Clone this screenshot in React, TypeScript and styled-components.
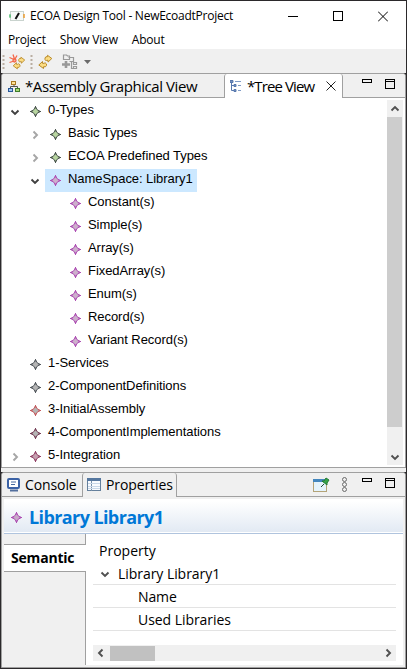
import React from 'react';
import styled, { createGlobalStyle } from 'styled-components';

const Global = createGlobalStyle`
  * { box-sizing: border-box; }
  body { margin: 0; background: #2b292b; overflow: hidden; }
  svg { display: block; flex: none; }
`;

const Window = styled.div`
  width: 407px;
  height: 669px;
  padding: 1px;
  background: #2b292b;
  display: flex;
  flex-direction: column;
  font-family: 'Open Sans', 'Noto Sans', sans-serif;
  color: #000;
  white-space: nowrap;
  line-height: 1;
`;

const Text = styled.span<{ $size: number; $gap?: number; $bold?: boolean; $color?: string }>`
  font-size: ${p => p.$size}px;
  letter-spacing: ${p => p.$gap ?? 0}px;
  font-weight: ${p => (p.$bold ? 700 : 400)};
  color: ${p => p.$color ?? '#000'};
  line-height: 20px;
`;

const TitleBar = styled.header`
  height: 30px;
  flex: none;
  background: #fff;
  display: flex;
  align-items: center;
  padding: 0 18px 0 8px;
  gap: 5px;
`;

const WindowButtons = styled.div`
  display: flex;
  margin-left: auto;
  gap: 35px;
`;

const MenuBar = styled.nav`
  height: 18px;
  flex: none;
  background: #fff;
  display: flex;
  align-items: center;
  padding-left: 7px;
  gap: 14px;
`;

const Toolbar = styled.div`
  height: 24px;
  flex: none;
  background: #f0f0f0;
`;

const Panel = styled.section<{ $height: number }>`
  height: ${p => p.$height}px;
  flex: none;
  border: 1px solid #a0a0a0;
  border-radius: 3px 3px 0 0;
  display: flex;
  flex-direction: column;
  background: #f0f0f0;
  overflow: hidden;
`;

const Divider = styled.div`
  height: 4px;
  flex: none;
  background: #f0f0f0;
`;

const TabBar = styled.div`
  height: 24px;
  flex: none;
  display: flex;
  background: linear-gradient(#a0a0a0, #a0a0a0) bottom / 100% 1px no-repeat #f0f0f0;
`;

const Tab = styled.div<{ $width: number; $active?: boolean; $fill?: string; $pad: number; $gap: number }>`
  width: ${p => p.$width}px;
  flex: none;
  display: flex;
  align-items: center;
  padding-left: ${p => p.$pad}px;
  gap: ${p => p.$gap}px;
  ${p => p.$active && `
    background: ${p.$fill ?? '#fff'};
    border-left: 1px solid #a0a0a0;
    border-right: 1px solid #a0a0a0;
    border-radius: 3px 3px 0 0;
  `}
`;

const CloseIcon = styled.svg`
  margin: 0 6px 0 auto;
`;

const PanelTools = styled.div`
  display: flex;
  margin-left: auto;
  padding-right: 9px;
`;

const TreeBody = styled.div`
  flex: 1;
  background: #fff;
  display: flex;
  justify-content: space-between;
  padding: 2px 2px 2px 0;
`;

const TreeRows = styled.ul`
  list-style: none;
  margin: 0;
  padding: 0;
`;

const Row = styled.li<{ $level: number }>`
  height: 23px;
  display: flex;
  align-items: center;
  padding-left: ${p => 2 + p.$level * 20}px;
`;

const ExpandCell = styled.div`
  width: 21px;
  height: 23px;
  display: flex;
  align-items: center;
  justify-content: center;
`;

const NodeCell = styled.div<{ $selected?: boolean }>`
  height: 23px;
  display: flex;
  align-items: center;
  padding: 0 7px 0 5px;
  background: ${p => (p.$selected ? '#cce8ff' : 'transparent')};
`;

const RowLabel = styled.div<{ $selected?: boolean }>`
  height: 23px;
  padding: 0 4px 4px 0;
  display: flex;
  align-items: center;
  background: ${p => (p.$selected ? '#cce8ff' : 'transparent')};
  font: 13px/20px 'Liberation Sans', Arial, sans-serif;
  letter-spacing: -0.06px;
`;

const VScroll = styled.div`
  width: 16px;
  height: 365px;
  background: #f0f0f0;
  display: flex;
  flex-direction: column;
  align-items: center;
  justify-content: space-between;
  padding: 4px 0 3px;
`;

const VThumb = styled.div`
  width: 15px;
  height: 310px;
  background: #cdcdcd;
  margin-right: 1px;
  margin-bottom: 23px;
`;

const Properties = styled.div`
  flex: 1;
  display: flex;
  flex-direction: column;
  padding: 2px;
`;

const Heading = styled.h1`
  margin: 0;
  height: 35px;
  flex: none;
  display: flex;
  align-items: center;
  padding: 2px 0 0 7px;
  gap: 7px;
  background: linear-gradient(#fff, #fff 6%, #e1e9f3);
  border-bottom: 1px solid #b0c4de;
  box-shadow: inset 0 -1px #fff;
`;

const Content = styled.div`
  flex: 1;
  display: flex;
  background: #fff;
`;

const Side = styled.aside`
  width: 82px;
  display: flex;
  flex-direction: column;
`;

const SideGap = styled.div<{ $top?: boolean }>`
  background: #f0f0f0;
  border-right: 1px solid #a0a0a0;
  ${p => (p.$top ? 'height: 11px; border-bottom: 1px solid #a0a0a0;' : 'flex: 1; border-top: 1px solid #a0a0a0;')}
`;

const SideTab = styled.div`
  height: 26px;
  padding: 0 0 0 7px;
  display: flex;
  align-items: center;
`;

const Table = styled.div`
  width: 303px;
  margin-left: 7px;
  padding-top: 5px;
`;

const Cell = styled.div<{ $indent: number; $line?: boolean }>`
  height: 23px;
  display: flex;
  align-items: center;
  gap: 8px;
  padding: 2px 0 0 ${p => p.$indent}px;
  border-bottom: 1px solid ${p => (p.$line ? '#e3e3e3' : 'transparent')};
`;

const HScroll = styled.div`
  height: 16px;
  margin-top: 14px;
  background: #f0f0f0;
  display: flex;
  align-items: center;
  padding: 0 3px;
`;

const HThumb = styled.div`
  width: 45px;
  height: 15px;
  margin: 0 auto 0 4px;
  background: #c1c1c1;
`;

type Dir = 'up' | 'down' | 'left' | 'right';
const arrows: Record<Dir, string> = {
  up: 'M1.5 6.5 5 3l3.5 3.5',
  down: 'M1.5 3.5 5 7l3.5-3.5',
  left: 'M6.5 1.5 3 5l3.5 3.5',
  right: 'M3.5 1.5 7 5 3.5 8.5',
};
const Arrow = ({ dir, color = '#505050' }: { dir: Dir; color?: string }) => (
  <svg width="10" height="10" fill="none" stroke={color} strokeWidth="1.9"><path d={arrows[dir]} /></svg>
);

const Star = ({ edge, fill }: { edge: string; fill: string }) => (
  <svg width="11" height="11">
    <path d="M5.500 .5 7.200 3.800 10.500 5.500 7.200 7.200 5.500 10.500 3.800 7.200 .5 5.500 3.800 3.800Z" fill={fill} stroke={edge} strokeWidth="1" />
    <path d="M5.500 0v2.500M5.500 8.500V11M0 5.500h2.500M8.500 5.500H11" stroke={edge} />
  </svg>
);

const AppIcon = () => (
  <svg width="16" height="16">
    <rect x="1.5" y="3.5" width="13" height="9" fill="#f7faf8" stroke="#c9d3ce" />
    <path d="M0 8h2M1 6v4" stroke="#48b868" />
    <path d="M15 6v4" stroke="#eca13a" strokeWidth="1.6" />
    <path d="M6.5 11 10 5" stroke="#111" strokeWidth="2" />
  </svg>
);

const REFRESH_UPPER = 'M6.500 5V3.500Q7 1.800 9 2.200V.8L13.300 4 9.500 7.600V5.800Q8 5.500 7.800 6.500Z';
const REFRESH_LOWER = 'M8.500 9V10.500Q8 12.200 5.500 11.800V13.500L.8 10 4.500 6.500V8.300Q6.500 8.800 7 7.600Z';

const ToolbarIcons = () => (
  <svg width="100" height="24">
    <path d="M2.500 6v14M30.500 6v14" stroke="#b9aea2" strokeWidth="2" strokeDasharray="2 2" />
    <g fill="#fbdc82" stroke="#b98a2a" strokeWidth="1">
      <path d={REFRESH_UPPER} transform="translate(12 7.500) scale(.88)" />
      <path d={REFRESH_LOWER} transform="translate(11.500 8) scale(.88)" />
      <path d={REFRESH_UPPER} transform="translate(37.500 5.500)" />
      <path d={REFRESH_LOWER} transform="translate(37 6)" />
    </g>
    <g fill="none" stroke="#f4674a" strokeWidth="1.3">
      <path d="M8.500 8.500 13 10.500M8.500 13.500l4.500-1.500M12 5.500l1.500 4.500M16 6.500l-2 3.500" />
      <circle cx="13.500" cy="11.500" r="1.500" fill="#f9b09c" />
    </g>
    <g fill="none" stroke="#999" strokeWidth="1.2">
      <path d="M62.500 6h3l1 1h2v3.500h-6zM67.500 8.500h5v4h-4M70.500 13v6.500h3" />
      <path d="M61 15.500h8M65 12v7" strokeWidth="2.600" />
      <path d="M72.500 13.500h3v2h-3zM72.500 17.500h3v2h-3z" />
    </g>
    <path d="M83 11h7l-3.500 4Z" fill="#6b6b6b" />
  </svg>
);

const AssemblyIcon = () => (
  <svg width="12" height="13">
    <path d="M6 4v3M2.500 9V6.500h7V9" stroke="#555" fill="none" />
    <rect x="3.500" y="1.500" width="4" height="3" fill="#ffe49a" stroke="#a87924" />
    <rect x=".5" y="8.500" width="4" height="3" fill="#9fc5f3" stroke="#285797" />
    <rect x="7.500" y="8.500" width="4" height="3" fill="#a8d878" stroke="#3d7c2a" />
  </svg>
);

const TreeIcon = () => (
  <svg width="12" height="12" fill="none" stroke="#5778ae">
    <path d="M1.500 2v8.500H4M1.500 5.500H4" />
    <path d="M0 .5h3v2H0zM4 4.500h2v2H4zM4 9.500h2v2H4z" fill="#7893bf" />
    <path d="M5 1.500h6M8 5.500h3M8 10.500h3" stroke="#7f9bc6" />
  </svg>
);

const ConsoleIcon = () => (
  <svg width="13" height="14">
    <rect x="1" y="1" width="11" height="9" rx="1" fill="#fff" stroke="#3b62a5" strokeWidth="2" />
    <path d="M4 4h5M4 6.500h4" stroke="#45699f" />
    <path d="M3 12.500h8" stroke="#536f9d" strokeWidth="2" />
  </svg>
);

const PropertiesIcon = () => (
  <svg width="14" height="14">
    <rect x=".5" y=".5" width="13" height="12" fill="#f8fbff" stroke="#65809c" />
    <path d="M0 1.500h14" stroke="#55779f" strokeWidth="3" />
    <path d="M4.500 3v10" stroke="#7891aa" />
    <path d="M1 5.500h12M1 8.500h12M1 10.500h12" stroke="#c8d7e8" />
  </svg>
);

const MinMax = () => (
  <svg width="34" height="24" fill="none" stroke="#000">
    <rect x=".5" y="5.500" width="9" height="3" />
    <rect x="23.500" y="5.500" width="9" height="9" />
    <path d="M23 7.500h10" />
  </svg>
);

const PinIcons = () => (
  <svg width="49" height="24">
    <rect x=".5" y="7.500" width="13" height="11" fill="#e4f3fc" stroke="#b4a377" />
    <path d="M0 7.500h12" stroke="#4386bd" strokeWidth="3" />
    <path d="m8 14 3-3" stroke="#234b35" />
    <path d="m9 8 2 0 2-3 3 2-2 3v2Z" fill="#36a348" stroke="#237b35" />
    <g fill="none" stroke="#6b6b6b"><circle cx="31.500" cy="6.500" r="2" /><circle cx="31.500" cy="11.500" r="2" /><circle cx="31.500" cy="16.500" r="2" /></g>
  </svg>
);

const PURPLE = ['#ae50b4', '#cdb0cc'];
const GREEN = ['#4c5750', '#b8d5a0'];
const GRAY = ['#555b60', '#b5b5b5'];

interface TreeItem { label: string; level: number; tone: string[]; open?: boolean; closed?: boolean; selected?: boolean }
const items: TreeItem[] = [
  { label: '0-Types', level: 0, tone: GREEN, open: true },
  { label: 'Basic Types', level: 1, tone: GREEN, closed: true },
  { label: 'ECOA Predefined Types', level: 1, tone: GREEN, closed: true },
  { label: 'NameSpace: Library1', level: 1, tone: PURPLE, open: true, selected: true },
  ...['Constant(s)', 'Simple(s)', 'Array(s)', 'FixedArray(s)', 'Enum(s)', 'Record(s)', 'Variant Record(s)'].map(
    label => ({ label, level: 2, tone: PURPLE })),
  { label: '1-Services', level: 0, tone: GRAY },
  { label: '2-ComponentDefinitions', level: 0, tone: GRAY },
  { label: '3-InitialAssembly', level: 0, tone: ['#c65c60', '#b5b5b5'] },
  { label: '4-ComponentImplementations', level: 0, tone: ['#774058', '#b5b5b5'] },
  { label: '5-Integration', level: 0, tone: ['#934468', '#c5a0b0'], closed: true },
];

const TreeNode = ({ label, level, tone, open, closed, selected }: TreeItem) => (
  <Row $level={level}>
    <ExpandCell>
      {open && <Arrow dir="down" color="#404040" />}
      {closed && <Arrow dir="right" color="#a6a6a6" />}
    </ExpandCell>
    <NodeCell $selected={selected}><Star edge={tone[0]} fill={tone[1]} /></NodeCell>
    <RowLabel $selected={selected}>{label}</RowLabel>
  </Row>
);

export default function App() {
  return (
    <Window>
      <Global />
      <TitleBar>
        <AppIcon />
        <Text $size={12} $gap={-0.25}>ECOA Design Tool - NewEcoadtProject</Text>
        <WindowButtons>
          <svg width="10" height="11" stroke="#000"><path d="M0 5.500h10" /></svg>
          <svg width="10" height="11" stroke="#000" fill="none"><rect x=".5" y=".5" width="9" height="9" /></svg>
          <svg width="10" height="11" stroke="#000"><path d="m0 .5 10 10M10 .5l-10 10" /></svg>
        </WindowButtons>
      </TitleBar>
      <MenuBar>
        <Text $size={12} $gap={-0.2}>Project</Text>
        <Text $size={12} $gap={-0.2}>Show View</Text>
        <Text $size={12} $gap={-0.2}>About</Text>
      </MenuBar>
      <Toolbar><ToolbarIcons /></Toolbar>
      <Panel $height={395}>
        <TabBar>
          <Tab $width={222} $pad={6} $gap={5}>
            <AssemblyIcon />
            <Text $size={15} $gap={-0.42}>*Assembly Graphical View</Text>
          </Tab>
          <Tab $width={119} $pad={5} $gap={5} $active>
            <TreeIcon />
            <Text $size={15} $gap={-0.9}>*Tree View</Text>
            <CloseIcon width="10" height="10" stroke="#222"><path d="m.5.5 9 9M9.500.5l-9 9" /></CloseIcon>
          </Tab>
          <PanelTools><MinMax /></PanelTools>
        </TabBar>
        <TreeBody>
          <TreeRows>{items.map(item => <TreeNode key={item.label} {...item} />)}</TreeRows>
          <VScroll>
            <Arrow dir="up" />
            <VThumb />
            <Arrow dir="down" />
          </VScroll>
        </TreeBody>
      </Panel>
      <Divider />
      <Panel $height={196}>
        <TabBar>
          <Tab $width={80} $pad={5} $gap={5}>
            <ConsoleIcon />
            <Text $size={14} $gap={-0.1}>Console</Text>
          </Tab>
          <Tab $width={95} $pad={4} $gap={5} $active $fill="#f0f0f0">
            <PropertiesIcon />
            <Text $size={14} $gap={-0.1}>Properties</Text>
          </Tab>
          <PanelTools><PinIcons /><MinMax /></PanelTools>
        </TabBar>
        <Properties>
          <Heading>
            <Star edge="#ae50b4" fill="#c8aac8" />
            <Text $size={18} $gap={-0.6} $bold $color="#0078d7">Library Library1</Text>
          </Heading>
          <Content>
            <Side>
              <SideGap $top />
              <SideTab><Text $size={14} $gap={-0.2} $bold>Semantic</Text></SideTab>
              <SideGap />
            </Side>
            <Table>
              <Cell $indent={6}><Text $size={14}>Property</Text></Cell>
              <Cell $indent={7} $line><Arrow dir="down" /><Text $size={14} $gap={-0.05}>Library Library1</Text></Cell>
              <Cell $indent={45} $line><Text $size={14} $gap={-0.1}>Name</Text></Cell>
              <Cell $indent={45} $line><Text $size={14} $gap={-0.05}>Used Libraries</Text></Cell>
              <HScroll><Arrow dir="left" /><HThumb /><Arrow dir="right" /></HScroll>
            </Table>
          </Content>
        </Properties>
      </Panel>
    </Window>
  );
}
